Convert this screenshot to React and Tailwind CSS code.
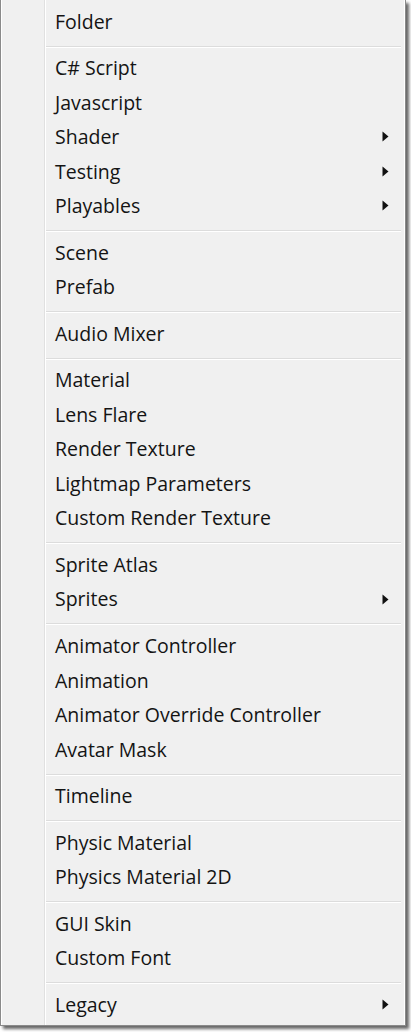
import React from "react";

const groups = [
  [["Folder"]],
  [["C# Script"], ["Javascript"], ["Shader", 1], ["Testing", 1], ["Playables", 1]],
  [["Scene"], ["Prefab"]],
  [["Audio Mixer"]],
  [["Material"], ["Lens Flare"], ["Render Texture"], ["Lightmap Parameters"], ["Custom Render Texture"]],
  [["Sprite Atlas"], ["Sprites", 1]],
  [["Animator Controller"], ["Animation"], ["Animator Override Controller"], ["Avatar Mask"]],
  [["Timeline"]],
  [["Physic Material"], ["Physics Material 2D"]],
  [["GUI Skin"], ["Custom Font"]],
  [["Legacy", 1]],
];

function Arrow() {
  return (
    <svg width="7" height="11" viewBox="0 0 7 11" className="shrink-0">
      <polygon points="0.5,0.5 6.5,5.5 0.5,10.5" fill="#111" />
    </svg>
  );
}

function Item({ label, sub }) {
  return (
    <div className="h-[34.5px] shrink-0 flex items-center justify-between pl-[9px] pr-[15px]">
      <span className="text-[19.5px] leading-none text-[#141414] [font-weight:450]">{label}</span>
      {sub ? <Arrow /> : null}
    </div>
  );
}

function Sep() {
  return (
    <div className="h-[12.1px] shrink-0 pt-[7px] pr-[3px]">
      <div className="h-px bg-[#dcdcdc]" />
      <div className="h-px bg-white" />
    </div>
  );
}

export default function App() {
  return (
    <div
      className="w-[411px] h-[1032px] bg-white overflow-hidden"
      style={{ fontFamily: '"Open Sans", "Noto Sans", sans-serif' }}
    >
      <div className="w-[406px] h-[1026px] border border-t-0 border-[#8a8a8a] bg-[#f0f0f0] shadow-[3px_3px_3px_rgba(0,0,0,0.6)] flex">
        <div className="w-[43px] shrink-0 border-l border-white" />
        <div className="w-[2px] shrink-0 flex">
          <div className="w-px bg-[#e0e0e0]" />
          <div className="w-px bg-white" />
        </div>
        <div className="flex-1 flex flex-col pt-[4px] border-r border-white">
          {groups.map((g, gi) => (
            <React.Fragment key={gi}>
              {gi > 0 ? <Sep /> : null}
              {g.map(([label, sub]) => (
                <Item key={label} label={label} sub={sub} />
              ))}
            </React.Fragment>
          ))}
        </div>
      </div>
    </div>
  );
}
